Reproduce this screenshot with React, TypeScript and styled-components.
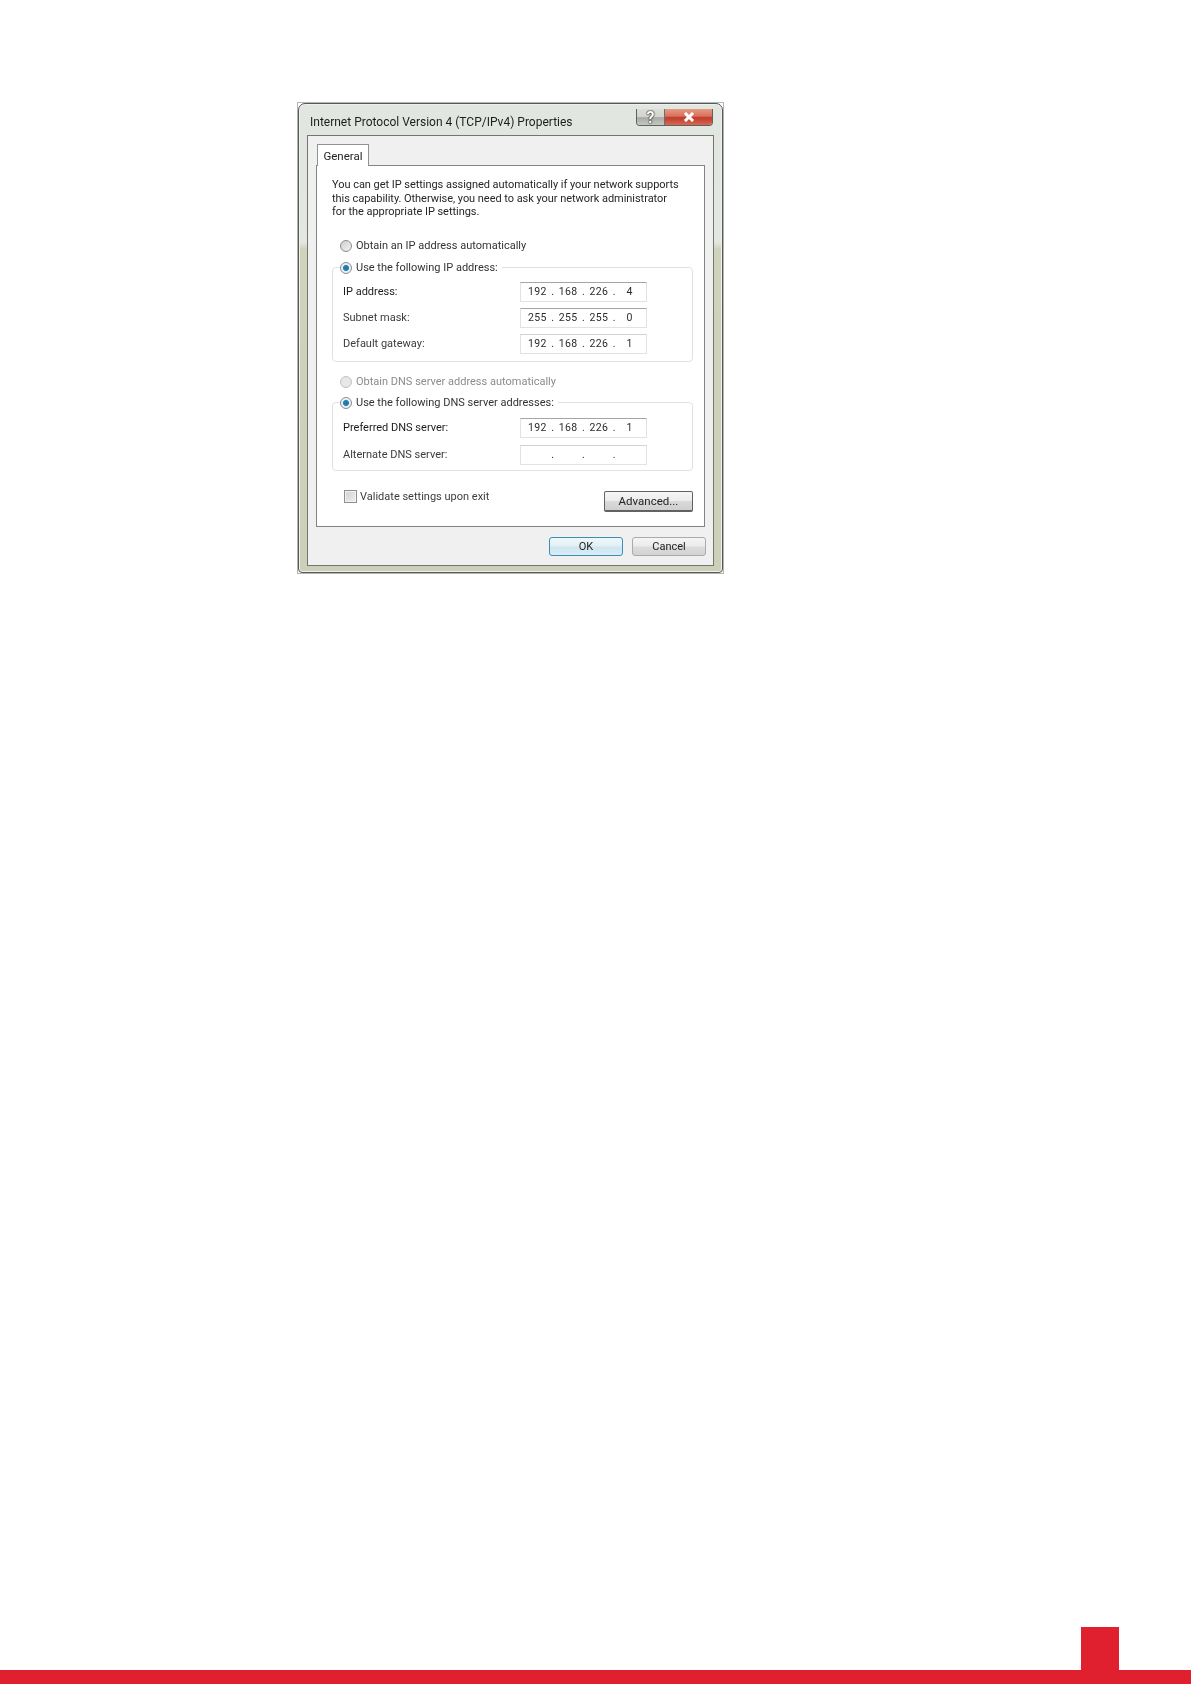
import React from "react";
import styled, { createGlobalStyle } from "styled-components";

const Global = createGlobalStyle`
  html, body { margin: 0; padding: 0; background: #fff; }
  * { box-sizing: border-box; }
`;

const Page = styled.div`
  width: 1191px;
  height: 1684px;
  display: flex;
  flex-direction: column;
  justify-content: space-between;
  background: #fff;
  font-family: "Roboto", "Liberation Sans", sans-serif;
  font-size: 11px;
`;

const Shot = styled.div`
  width: 427px;
  height: 472px;
  margin: 102px 0 0 297px;
  border: 1px solid #b4b6b4;
  background: #fff;
  filter: blur(0.4px);
`;

const Window = styled.div`
  width: 100%;
  height: 100%;
  display: flex;
  flex-direction: column;
  padding: 0 9px 7px 9px;
  border: 1px solid #55595a;
  border-radius: 7px 7px 4px 4px;
  background: linear-gradient(180deg, #e2e6e1 0%, #e3e7e2 29.5%, #d0d3bb 31%, #cdd0b8 100%);
  box-shadow: inset 0 0 0 1px #eef0ea;
`;

const TitleBar = styled.div`
  height: 32px;
  flex: none;
  display: flex;
  justify-content: space-between;
  align-items: flex-start;
`;

const Title = styled.div`
  margin: 10px 0 0 2px;
  font-size: 12px;
  line-height: 16px;
  color: #1d1d1d;
`;

const CaptionGroup = styled.div`
  display: flex;
  height: 17px;
  margin-top: 5px;
  border: 1px solid #5d6160;
  border-top: none;
  border-radius: 0 0 4px 4px;
  overflow: hidden;
`;

const CaptionHelp = styled.div`
  width: 28px;
  display: flex;
  align-items: center;
  justify-content: center;
  font-size: 16px;
  font-weight: 700;
  color: #fff;
  text-shadow: 0 0 1px #111, 0 0 1px #111, 0 0 2px #333;
  background: linear-gradient(180deg, #dcddd8 0%, #d3d4cf 48%, #a9aba4 54%, #c4c6c0 100%);
  border-right: 1px solid #6a6e6c;
`;

const CaptionClose = styled.div`
  width: 47px;
  display: flex;
  align-items: center;
  justify-content: center;
  background: linear-gradient(180deg, #e49a84 0%, #d9705a 45%, #c1392a 54%, #d56a52 100%);
`;

const Client = styled.div`
  flex: 1;
  display: flex;
  flex-direction: column;
  padding: 7px 8px 0 7px;
  background: #f0f0f0;
  border: 1px solid #f0f0f0;
  outline: 1.5px solid #73766f;
`;

const Tab = styled.div`
  width: 52px;
  height: 22px;
  margin: 0 0 -1px 1px;
  position: relative;
  z-index: 1;
  display: flex;
  align-items: center;
  justify-content: center;
  font-size: 11.5px;
  color: #222;
  background: #fff;
  border: 1px solid #8e9394;
  border-bottom: none;
`;

const TabPanel = styled.div`
  width: 389px;
  height: 362px;
  flex: none;
  padding: 12px 12px 0 15px;
  background: #fff;
  border: 1px solid #7f8485;
`;

const Intro = styled.p`
  margin: 0;
  line-height: 13.5px;
  letter-spacing: -0.04px;
  color: #262626;
  white-space: nowrap;
`;

const OptionRow = styled.div<{ $mt: number }>`
  display: flex;
  align-items: center;
  gap: 4px;
  height: 14px;
  margin: ${(p) => p.$mt}px 0 0 8px;
`;

const OptionText = styled.span<{ $disabled?: boolean }>`
  color: ${(p) => (p.$disabled ? "#8c8c8c" : "#333")};
`;

const Radio = styled.span<{ $on?: boolean; $disabled?: boolean }>`
  width: 12px;
  height: 12px;
  flex: none;
  border-radius: 50%;
  border: 1px solid ${(p) => (p.$disabled ? "#c2c2c2" : "#8a8d8f")};
  background: ${(p) =>
    p.$on
      ? "radial-gradient(circle, #1f6f9e 0%, #2a86b8 38%, #e8eef2 48%, #f4f6f7 100%)"
      : p.$disabled
      ? "#e7e7e7"
      : "linear-gradient(135deg, #cfcfcf, #f2f2f2)"};
`;

const Group = styled.fieldset<{ $h: number; $mt: number }>`
  height: ${(p) => p.$h}px;
  width: 361px;
  min-width: 0;
  margin: ${(p) => p.$mt}px 0 0 0;
  padding: 0 0 0 10px;
  border: 1px solid #dfe2e5;
  border-radius: 4px;
`;

const GroupLegend = styled.legend`
  display: flex;
  align-items: center;
  gap: 4px;
  height: 14px;
  padding: 0 4px 0 0;
  margin-left: -3px;
  color: #333;
`;

const FieldList = styled.div<{ $gap: number; $pt: number }>`
  display: flex;
  flex-direction: column;
  gap: ${(p) => p.$gap}px;
  padding-top: ${(p) => p.$pt}px;
`;

const FieldRow = styled.div`
  display: flex;
  align-items: center;
  height: 20px;
`;

const FieldLabel = styled.span<{ $strong?: boolean }>`
  width: 177px;
  flex: none;
  color: ${(p) => (p.$strong ? "#1c1c1c" : "#3c3c3c")};
`;

const IpField = styled.div<{ $dark?: boolean }>`
  width: 127px;
  height: 20px;
  padding: 0 3px;
  display: flex;
  align-items: center;
  background: #fff;
  border: 1px solid #e0e2e3;
  border-top-color: ${(p) => (p.$dark ? "#a3a5a6" : "#d0d2d3")};
  font-size: 10.5px;
  color: #2b2b2b;
  letter-spacing: 0.3px;
`;

const Octet = styled.span`
  flex: 1;
  text-align: center;
`;

const Dot = styled.span`
  width: 4px;
  text-align: center;
`;

const BottomRow = styled.div`
  display: flex;
  justify-content: space-between;
  align-items: flex-start;
  width: 361px;
  margin-top: 19px;
  padding-left: 12px;
`;

const CheckLine = styled.div`
  display: flex;
  align-items: center;
  gap: 3px;
  height: 13px;
  color: #3c3c3c;
`;

const CheckBox = styled.span`
  width: 13px;
  height: 13px;
  flex: none;
  border: 1px solid #8d8f90;
  background: linear-gradient(135deg, #d2d2d2, #eeeeee);
  box-shadow: inset 0 0 0 1px #f3f3f3;
`;

const AdvancedButton = styled.div`
  width: 89px;
  height: 21px;
  margin-top: 1px;
  display: flex;
  align-items: center;
  justify-content: center;
  font-size: 11.5px;
  color: #222;
  border: 1px solid #5f6366;
  border-bottom-width: 2px;
  border-radius: 2px;
  background: linear-gradient(180deg, #f6f6f6 0%, #ececec 48%, #d9d9d9 52%, #cfcfcf 100%);
`;

const Footer = styled.div`
  display: flex;
  justify-content: flex-end;
  gap: 9px;
  width: 390px;
  padding-top: 10px;
`;

const DialogButton = styled.div<{ $primary?: boolean }>`
  width: 74px;
  height: 19px;
  display: flex;
  align-items: center;
  justify-content: center;
  color: #222;
  border: 1px solid ${(p) => (p.$primary ? "#3c8fb3" : "#a8aaab")};
  border-radius: 3px;
  background: ${(p) =>
    p.$primary
      ? "linear-gradient(180deg, #eef7fb 0%, #e2f0f6 48%, #cfe5ef 52%, #d8ecf4 100%)"
      : "linear-gradient(180deg, #f5f5f5 0%, #ebebeb 48%, #dcdcdc 52%, #d3d3d3 100%)"};
`;

const PageFooter = styled.footer`
  display: flex;
  flex-direction: column;
`;

const PageMark = styled.div`
  width: 38px;
  height: 43px;
  margin-left: 1081px;
  background: #e01f2f;
`;

const PageBar = styled.div`
  height: 14px;
  background: #e01f2f;
`;

const octets = (v: string[]) =>
  v.map((o, i) => (
    <React.Fragment key={i}>
      <Octet>{o}</Octet>
      {i < 3 && <Dot>.</Dot>}
    </React.Fragment>
  ));

export default function App() {
  return (
    <Page>
      <Global />
      <Shot>
        <Window>
          <TitleBar>
            <Title>Internet Protocol Version 4 (TCP/IPv4) Properties</Title>
            <CaptionGroup>
              <CaptionHelp>?</CaptionHelp>
              <CaptionClose>
                <svg width="12" height="10" viewBox="0 0 12 10">
                  <path d="M3 2 L9 8 M9 2 L3 8" stroke="#fff" strokeWidth="3" strokeLinecap="square" />
                </svg>
              </CaptionClose>
            </CaptionGroup>
          </TitleBar>
          <Client>
            <Tab>General</Tab>
            <TabPanel>
              <Intro>
                You can get IP settings assigned automatically if your network supports
                <br />
                this capability. Otherwise, you need to ask your network administrator
                <br />
                for the appropriate IP settings.
              </Intro>
              <OptionRow $mt={20}>
                <Radio />
                <OptionText>Obtain an IP address automatically</OptionText>
              </OptionRow>
              <Group $h={101} $mt={8}>
                <GroupLegend>
                  <Radio $on />
                  Use the following IP address:
                </GroupLegend>
                <FieldList $gap={6} $pt={7}>
                  <FieldRow>
                    <FieldLabel $strong>IP address:</FieldLabel>
                    <IpField $dark>{octets(["192", "168", "226", "4"])}</IpField>
                  </FieldRow>
                  <FieldRow>
                    <FieldLabel>Subnet mask:</FieldLabel>
                    <IpField $dark>{octets(["255", "255", "255", "0"])}</IpField>
                  </FieldRow>
                  <FieldRow>
                    <FieldLabel>Default gateway:</FieldLabel>
                    <IpField>{octets(["192", "168", "226", "1"])}</IpField>
                  </FieldRow>
                </FieldList>
              </Group>
              <OptionRow $mt={13}>
                <Radio $disabled />
                <OptionText $disabled>Obtain DNS server address automatically</OptionText>
              </OptionRow>
              <Group $h={75} $mt={7}>
                <GroupLegend>
                  <Radio $on />
                  Use the following DNS server addresses:
                </GroupLegend>
                <FieldList $gap={7} $pt={8}>
                  <FieldRow>
                    <FieldLabel $strong>Preferred DNS server:</FieldLabel>
                    <IpField $dark>{octets(["192", "168", "226", "1"])}</IpField>
                  </FieldRow>
                  <FieldRow>
                    <FieldLabel>Alternate DNS server:</FieldLabel>
                    <IpField>{octets(["", "", "", ""])}</IpField>
                  </FieldRow>
                </FieldList>
              </Group>
              <BottomRow>
                <CheckLine>
                  <CheckBox />
                  Validate settings upon exit
                </CheckLine>
                <AdvancedButton>Advanced...</AdvancedButton>
              </BottomRow>
            </TabPanel>
            <Footer>
              <DialogButton $primary>OK</DialogButton>
              <DialogButton>Cancel</DialogButton>
            </Footer>
          </Client>
        </Window>
      </Shot>
      <PageFooter>
        <PageMark />
        <PageBar />
      </PageFooter>
    </Page>
  );
}
